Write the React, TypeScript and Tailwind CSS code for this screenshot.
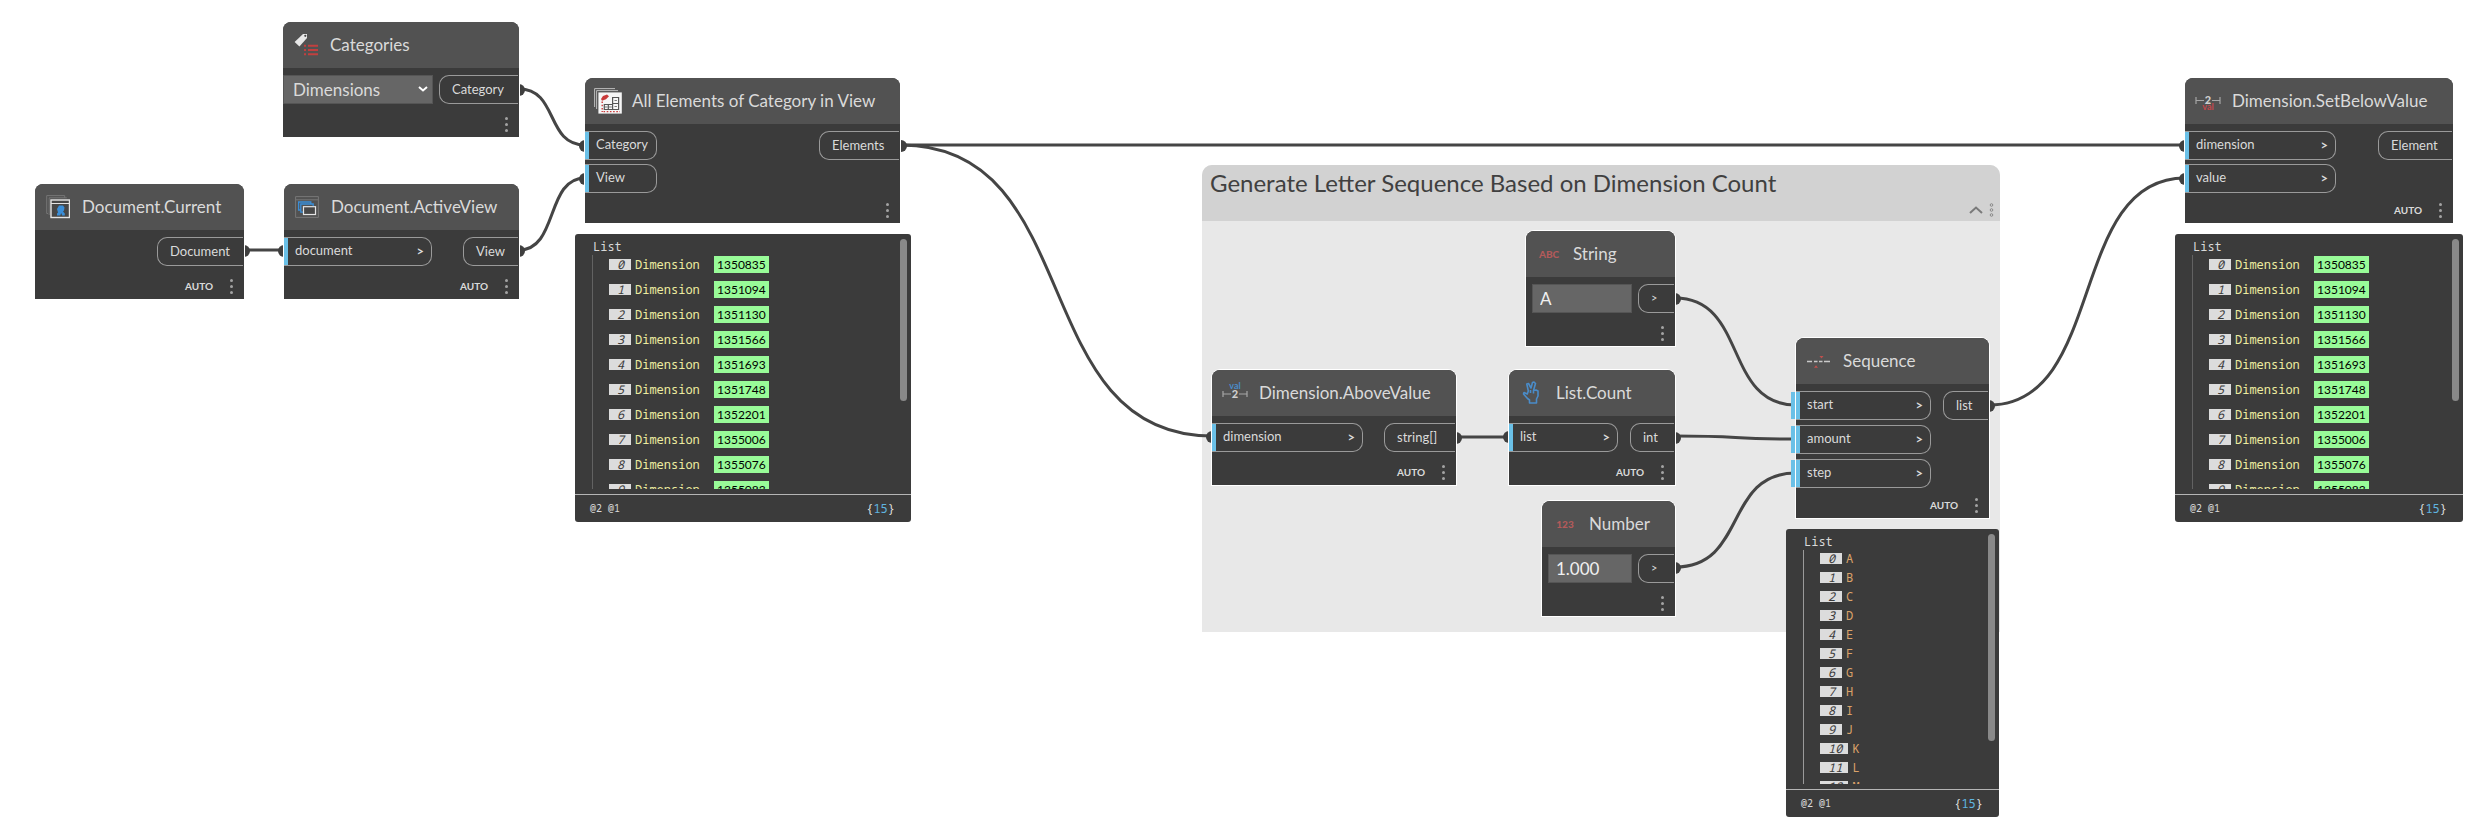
import type { ReactNode } from "react";

type Row = { name: string; id?: string };

const DIMENSION_ROWS: Row[] = [
  "1350835",
  "1351094",
  "1351130",
  "1351566",
  "1351693",
  "1351748",
  "1352201",
  "1355006",
  "1355076",
  "1355083",
].map((id) => ({ name: "Dimension", id }));

const LETTER_ROWS: Row[] = "ABCDEFGHIJKLM".split("").map((name) => ({ name }));

/* ---------- icons ---------- */

function CategoriesIcon() {
  return (
    <svg viewBox="0 0 24 24" className="size-6">
      <path d="M9 1h4v4L5.400 13.600 0.600 9z" fill="#e8e8e8" />
      <circle cx="11.300" cy="2.800" r="1.100" fill="#444" />
      <path d="M10 12.800h2M14 12.800h10M10 17h2M14 17h10M10 21.200h2M14 21.200h10" stroke="#c2403f" strokeWidth="2" />
    </svg>
  );
}

function DocumentIcon() {
  return (
    <svg viewBox="0 0 24 24" className="size-6" fill="none">
      <path d="M2 18.500H.700V.600h18v2.200M3.200 20V2.800h17.600" stroke="#757575" />
      <rect x="5" y="5" width="18.500" height="17.500" stroke="#e4e4e4" strokeWidth="1.400" fill="#474747" />
      <path d="M5 8.500h18.500" stroke="#e4e4e4" />
      <path d="M11 20.500v-2l1-1-1-3.500 2-3.500h4l1.500 2-.500 3-1 1 1.800 2v2h-2.600l-1-2.500-1 2.500z" fill="#3a8ed8" />
    </svg>
  );
}

function ActiveViewIcon() {
  return (
    <svg viewBox="0 0 24 24" className="size-6" fill="none">
      <path d="M.600 1.600h22.800v20.800H.600zM.600 4.800h22.800" stroke="#777" />
      <path d="M6 15H3.600V7h12.200v2M8 17.200H5.800V9h12.400v2.200" stroke="#3a8ed8" strokeWidth="1.300" />
      <rect x="8.500" y="11.700" width="12" height="7.800" fill="#474747" stroke="#e4e4e4" strokeWidth="1.200" />
    </svg>
  );
}

function ElementsIcon() {
  return (
    <svg viewBox="0 0 28 26" className="h-[26px] w-7 shrink-0" fill="none">
      <path d="M.600 19V.600H21M2.600 21V2.600H24" stroke="#bcbcbc" strokeWidth="1" />
      <rect x="4.400" y="4.400" width="23.400" height="21.200" fill="#f6f6f6" />
      <path d="m7 11 2-3 4-1.400 2 1.600-3 3-4 1.600z" fill="#c93a3a" />
      <path d="M8.200 13.500V24M9.500 23.600H26" stroke="#c93a3a" strokeWidth="1.400" strokeDasharray="1.6 1.6" />
      <path d="M18.600 9.500h6v6h-6zM18.600 15.500h6v6h-6zM10.300 16.500h4v5h-4zM14.300 16.500h4.300v5h-4.300z" stroke="#555" strokeWidth="1.200" />
      <path d="M20.500 12.500h2.400M20.500 18.500h2.400M11 19h2.600M15 19h2.800" stroke="#777" />
    </svg>
  );
}

function DimensionIcon({ below = false }: { below?: boolean }) {
  return (
    <svg viewBox="0 0 26 24" className="h-6 w-[26px] shrink-0" fontFamily="Lato, sans-serif" textAnchor="middle">
      <path
        d={below ? "M1 8v7M1 11.500h8M17 11.500h8M25 8v7" : "M1 10v6M1 13h8M17 13h8M25 10v6"}
        stroke="#a6a6a6"
        strokeWidth="1.200"
        fill="none"
      />
      <text x="13" y={below ? 15 : 17} fontSize="11" fontWeight="900" fill="#cfcfcf">
        2
      </text>
      <text x="13" y={below ? 21 : 8} fontSize="9" fontWeight="700" fill={below ? "#c4474b" : "#4a8cc9"}>
        val
      </text>
    </svg>
  );
}

function CountIcon() {
  return (
    <svg viewBox="0 0 24 24" className="size-6" fill="none">
      <path
        d="M9.500 22h7v-4l1.500-3v-5l-2-1-2.500.500 2-7L14 1l-1.500.500L11 7 8.500 2.500 6.800 3l1.500 7-1 3-3.300-1.500L3.500 13l4 4.500 2 1.500zM10.500 9v3M13.500 9.500v3"
        stroke="#4a8cc9"
        strokeWidth="1.600"
        strokeLinejoin="round"
      />
    </svg>
  );
}

function SequenceIcon() {
  return (
    <svg viewBox="0 0 24 24" className="size-6">
      <path d="M0 12.500h5M7 12.500h3.500M12 12.500h3.500M17 12.500h6" stroke="#c9c9c9" strokeWidth="1.300" />
      <path d="M12.500 7h4l-2 2.500zM7 18.800h4l-2-2.500z" fill="#c0504d" />
    </svg>
  );
}

function TextIcon({ text }: { text: string }) {
  return <span className="text-[10px] font-black text-[#b35a5a]">{text}</span>;
}

/* ---------- node parts ---------- */

function In({ label, width, chevron = true, tab = false }: { label: string; width: string; chevron?: boolean; tab?: boolean }) {
  return (
    <div className={`relative flex h-[29px] items-center rounded-r-[10px] border border-l-0 border-[#9a9a9a] pr-[7px] ${width}`}>
      {tab && <span className="absolute -left-[5px] h-[27px] w-1 bg-[#6ac0e7]" />}
      <span className="h-[27px] w-1 bg-[#6ac0e7]" />
      <span className="grow pb-0.5 pl-[7px] text-[13px]">{label}</span>
      {chevron && <span className="text-[13px] font-bold">&gt;</span>}
    </div>
  );
}

function Out({ label, width, small = false }: { label: string; width: string; small?: boolean }) {
  return (
    <div
      className={`mr-px flex h-[29px] items-center rounded-l-[10px] border border-r-0 border-[#9a9a9a] pl-3 ${width} ${
        small ? "text-[11px]" : "text-[13px]"
      }`}
    >
      {label}
    </div>
  );
}

function NodeCard({
  place,
  title,
  icon,
  auto = false,
  tall = false,
  children,
}: {
  place: string;
  title: string;
  icon: ReactNode;
  auto?: boolean;
  tall?: boolean;
  children: ReactNode;
}) {
  return (
    <section className={`absolute rounded-t-lg bg-[#3b3b3b] text-[#dadada] ring-1 ring-white ${place}`}>
      <header className="flex h-[46px] items-center gap-3 rounded-t-lg bg-[#525252] pl-[11px]">
        <span className="flex w-6 items-center justify-center">{icon}</span>
        <h2 className="whitespace-nowrap text-[17px]">{title}</h2>
      </header>
      <div className="flex items-start justify-between pt-[7px]">{children}</div>
      <footer className={`flex h-[26px] items-center justify-end gap-3 pr-[7px] ${tall ? "mt-1" : "mt-[7px]"}`}>
        {auto && <span className="text-[10px] font-bold">AUTO</span>}
        <button type="button" aria-label={`${title} options`} className="flex w-3 flex-col items-center gap-[3px]">
          <span className="size-[3px] rounded-full bg-[#a3a3a3]" />
          <span className="size-[3px] rounded-full bg-[#a3a3a3]" />
          <span className="size-[3px] rounded-full bg-[#a3a3a3]" />
        </button>
      </footer>
    </section>
  );
}

function Preview({ place, rows, thumb, dense = false }: { place: string; rows: Row[]; thumb: string; dense?: boolean }) {
  return (
    <section
      className={`absolute rounded-[3px] bg-[#3b3b3b] font-['Noto_Sans_Mono','DejaVu_Sans_Mono',monospace] text-[12px] text-[#dadada] ${place}`}
    >
      <div className={`absolute right-1 top-[5px] w-[7px] rounded-full bg-[#898989] ${thumb}`} />
      <div className="pl-[18px] pt-[5px] leading-4">List</div>
      <div className={`ml-[17px] h-[234px] overflow-hidden border-l pl-4 ${dense ? "border-[#9a9a9a] pt-[3px]" : "border-[#626262] pt-px"}`}>
        {rows.map((row, i) => (
          <div key={i} className={dense ? "flex h-[19px] items-start" : "mb-2 flex h-[17px] items-center"}>
            <span className="flex h-[11px] min-w-[22px] items-center bg-[#dcdcdc] pl-2 pr-1.5 italic text-[#3b3b3b]">{i}</span>
            {row.id ? (
              <>
                <span className="ml-1 w-[79px] text-[#eeeda0]">{row.name}</span>
                <a
                  href={`#${row.id}`}
                  className="flex h-[17px] items-center bg-[#98fb98] px-[3px] font-['Lato',sans-serif] text-[12px] text-black"
                >
                  {row.id}
                </a>
              </>
            ) : (
              <span className="ml-1 leading-3 text-[#dba36a]">{row.name}</span>
            )}
          </div>
        ))}
      </div>
      <footer className="mt-[5px] flex h-7 items-center justify-between border-t border-[#b5b5b5] pl-[15px] pr-4">
        <span className="text-[10px]">@2 @1</span>
        <span>
          {"{"}
          <span className="text-[#5fb4e0]">15</span>
          {"}"}
        </span>
      </footer>
    </section>
  );
}

/* ---------- wires ---------- */

const WIRES: [number, number, number, number][] = [
  [519, 89, 585, 145],
  [244, 250, 284, 250],
  [519, 250, 585, 178],
  [901, 145, 2185, 145],
  [901, 145, 1212, 436],
  [1456, 437, 1509, 437],
  [1675, 298, 1796, 405],
  [1675, 436, 1796, 439],
  [1675, 567, 1796, 473],
  [1989, 405, 2185, 178],
];

const CAPS: [number, number][] = [
  [519, 90],
  [585, 146],
  [244, 251],
  [284, 251],
  [519, 251],
  [585, 179],
  [901, 146],
  [2185, 146],
  [1212, 437],
  [1456, 438],
  [1509, 437],
  [1675, 299],
  [1675, 438],
  [1675, 568],
  [1989, 406],
  [2185, 179],
];

function Wires() {
  return (
    <svg className="pointer-events-none absolute inset-0 size-full overflow-visible">
      {WIRES.map(([x1, y1, x2, y2], i) => {
        const bend = (x2 - x1) * 0.6;
        return (
          <path key={i} d={`M${x1} ${y1}C${x1 + bend} ${y1} ${x2 - bend} ${y2} ${x2} ${y2}`} fill="none" stroke="#454545" strokeWidth="3" />
        );
      })}
      {CAPS.map(([x, y], i) => (
        <circle key={i} cx={x} cy={y} r="6" fill="#3f3f3f" />
      ))}
    </svg>
  );
}

export default function App() {
  return (
    <main className="relative min-h-screen overflow-hidden bg-white font-['Lato','Open_Sans',sans-serif]">
      <section className="absolute left-[1202px] top-[165px] h-[467px] w-[798px] overflow-hidden rounded-t-[10px] bg-[#e8e8e8]">
        <header className="flex h-14 justify-between bg-[#d2d2d2] pl-2 pr-1.5">
          <h1 className="text-[24px] leading-9 text-[#404040]">Generate Letter Sequence Based on Dimension Count</h1>
          <div className="flex items-end gap-1.5 pb-1">
            <button type="button" aria-label="Collapse group" className="flex h-3.5 items-center">
              <svg viewBox="0 0 14 8" className="h-2 w-3.5">
                <path d="m1 7 6-5.500L13 7" fill="none" stroke="#7a7a7a" strokeWidth="2" />
              </svg>
            </button>
            <button type="button" aria-label="Group options" className="flex h-3.5 items-center">
              <svg viewBox="0 0 5 14" className="h-3.5 w-[5px]" fill="none" stroke="#7a7a7a" strokeWidth="0.8">
                <circle cx="2.500" cy="2" r="1.300" />
                <circle cx="2.500" cy="7" r="1.300" />
                <circle cx="2.500" cy="12" r="1.300" />
              </svg>
            </button>
          </div>
        </header>
      </section>

      <Wires />

      <NodeCard place="left-[283px] top-[22px] w-[236px]" title="Categories" icon={<CategoriesIcon />}>
        <div className="relative w-[150px]">
          <select
            aria-label="Category"
            className="h-[29px] w-full appearance-none rounded-none border border-[#555] bg-[#666] pl-[9px] text-[17px] text-[#dadada]"
          >
            <option>Dimensions</option>
          </select>
          <svg viewBox="0 0 10 6" className="pointer-events-none absolute right-[5px] top-[11px] h-1.5 w-2.5">
            <path d="m1 1 4 3.500L9 1" fill="none" stroke="#fff" strokeWidth="2" />
          </svg>
        </div>
        <Out label="Category" width="w-[79px]" />
      </NodeCard>

      <NodeCard place="left-[35px] top-[184px] w-[209px]" title="Document.Current" icon={<DocumentIcon />} auto>
        <span />
        <Out label="Document" width="w-[86px]" />
      </NodeCard>

      <NodeCard place="left-[284px] top-[184px] w-[235px]" title="Document.ActiveView" icon={<ActiveViewIcon />} auto>
        <In label="document" width="w-[148px]" />
        <Out label="View" width="w-[55px]" />
      </NodeCard>

      <NodeCard place="left-[585px] top-[78px] w-[315px]" title="All Elements of Category in View" icon={<ElementsIcon />} tall>
        <div className="flex flex-col gap-1">
          <In label="Category" width="w-[72px]" chevron={false} />
          <In label="View" width="w-[72px]" chevron={false} />
        </div>
        <Out label="Elements" width="w-20" />
      </NodeCard>
      <Preview place="left-[575px] top-[234px] w-[336px]" rows={DIMENSION_ROWS} thumb="h-[162px]" />

      <NodeCard place="left-[1526px] top-[231px] w-[149px]" title="String" icon={<TextIcon text="ABC" />}>
        <input
          aria-label="String value"
          defaultValue="A"
          className="ml-1.5 h-[29px] w-[100px] border border-[#555] bg-[#666] px-[7px] text-[17px] text-[#f0f0f0]"
        />
        <Out label=">" width="w-9" small />
      </NodeCard>

      <NodeCard place="left-[1212px] top-[370px] w-[244px]" title="Dimension.AboveValue" icon={<DimensionIcon />} auto>
        <In label="dimension" width="w-[151px]" />
        <Out label="string[]" width="w-[71px]" />
      </NodeCard>

      <NodeCard place="left-[1509px] top-[370px] w-[166px]" title="List.Count" icon={<CountIcon />} auto>
        <In label="list" width="w-[109px]" />
        <Out label="int" width="w-11" />
      </NodeCard>

      <NodeCard place="left-[1542px] top-[501px] w-[133px]" title="Number" icon={<TextIcon text="123" />}>
        <input
          aria-label="Number value"
          defaultValue="1.000"
          className="ml-1.5 h-[29px] w-[84px] border border-[#555] bg-[#666] px-[7px] text-[17px] text-[#f0f0f0]"
        />
        <Out label=">" width="w-9" small />
      </NodeCard>

      <NodeCard place="left-[1796px] top-[338px] w-[193px]" title="Sequence" icon={<SequenceIcon />} auto tall>
        <div className="flex flex-col gap-[5px]">
          <In label="start" width="w-[135px]" tab />
          <In label="amount" width="w-[135px]" tab />
          <In label="step" width="w-[135px]" tab />
        </div>
        <Out label="list" width="w-[45px]" />
      </NodeCard>
      <Preview place="left-[1786px] top-[529px] w-[213px]" rows={LETTER_ROWS} thumb="h-[207px]" dense />

      <NodeCard place="left-[2185px] top-[78px] w-[268px]" title="Dimension.SetBelowValue" icon={<DimensionIcon below />} auto tall>
        <div className="flex flex-col gap-1">
          <In label="dimension" width="w-[151px]" />
          <In label="value" width="w-[151px]" />
        </div>
        <Out label="Element" width="w-[74px]" />
      </NodeCard>
      <Preview place="left-[2175px] top-[234px] w-[288px]" rows={DIMENSION_ROWS} thumb="h-[162px]" />
    </main>
  );
}
